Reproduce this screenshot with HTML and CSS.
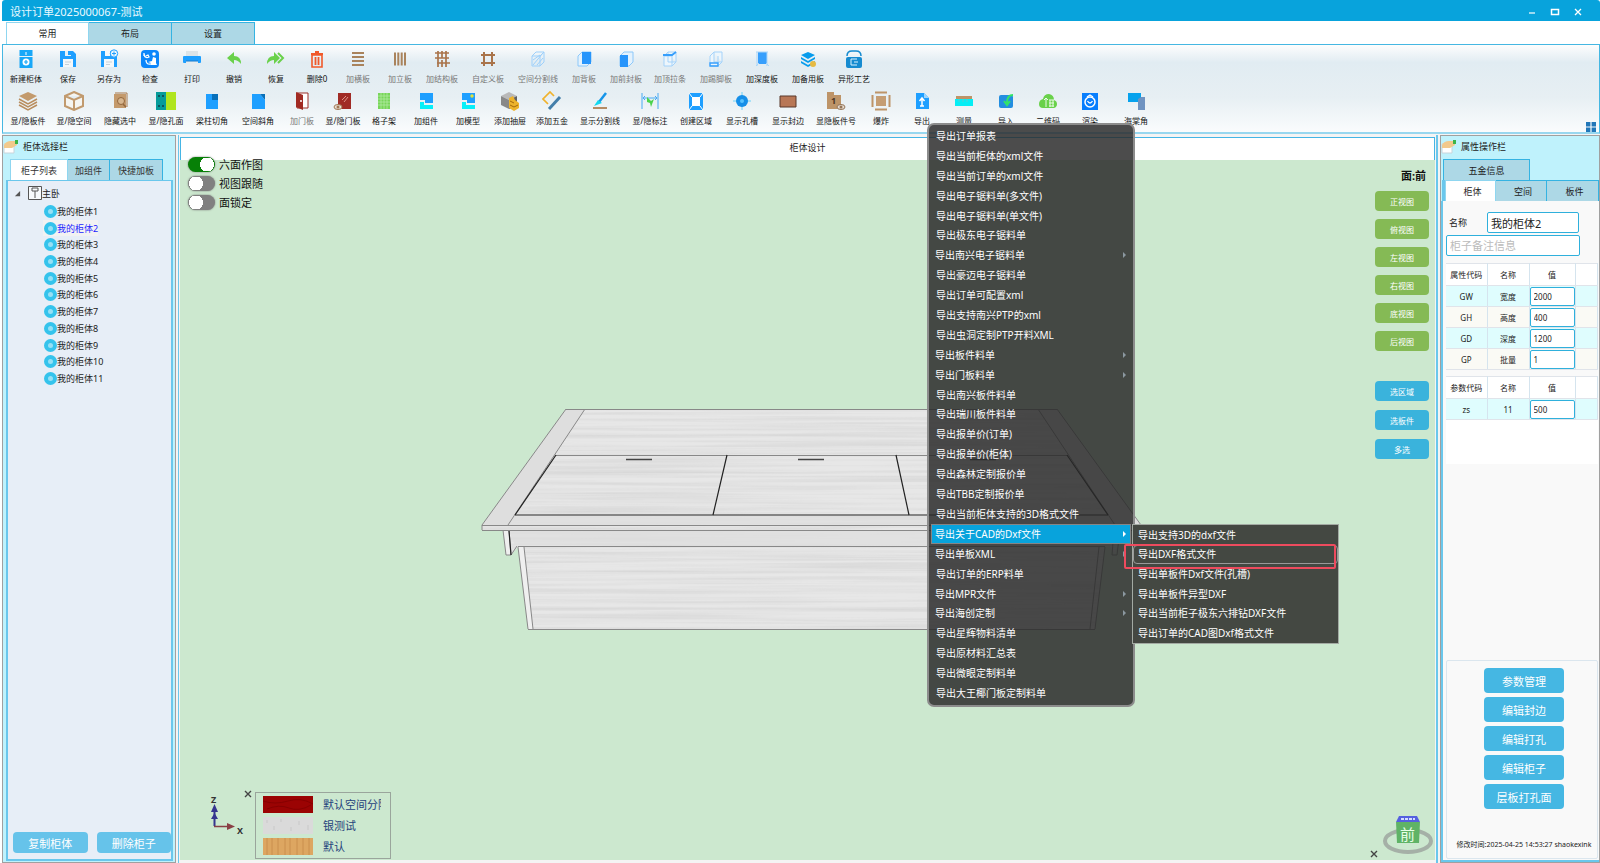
FILE: index.html
```html
<!DOCTYPE html>
<html lang="zh-CN">
<head>
<meta charset="utf-8">
<title>设计订单2025000067-测试</title>
<link rel="stylesheet" href="styles.css">
</head>
<body>
<div class="app">
<header class="titlebar">
  <h1>设计订单2025000067-测试</h1>
  <div class="win-buttons">
    <button aria-label="最小化"><svg viewBox="0 0 10 10"><path d="M2 6h6" stroke="#fff" stroke-width="1.2"/></svg></button>
    <button aria-label="最大化"><svg viewBox="0 0 10 10"><path d="M1.500 2.500h7v5h-7z" fill="none" stroke="#fff" stroke-width="1.500"/></svg></button>
    <button aria-label="关闭"><svg viewBox="0 0 10 10"><path d="M2 2l6 6M8 2l-6 6" stroke="#fff" stroke-width="1.300"/></svg></button>
  </div>
</header>
<nav class="tabs main-tabs">
  <button class="tab active">常用</button><button class="tab">布局</button><button class="tab">设置</button>
</nav>
<section class="ribbon">
  <div class="tool-row">
    <button class="tool"><svg viewBox="0 0 20 20"><path d="M3.500 1h13v6h-13zM3.500 8h13v11h-13z" fill="#18a8f8"/><path d="M10 3v3" stroke="#fff"/><circle cx="10" cy="13" r="3.500" fill="#fff"/><path d="M10 11v4M8 13h4" stroke="#18a8f8" stroke-width="1.200"/></svg><span>新建柜体</span></button>
    <button class="tool"><svg viewBox="0 0 20 20"><path d="M2 2h13l3 3v13h-16z" fill="#1e9fff"/><path d="M7 2h6v5h-6z" fill="#e8f1f6"/><path d="M10 2h3v4h-3z" fill="#1e9fff"/><path d="M5 10h10v8h-10z" fill="#f4f8fa"/><path d="M7 13h6M7 15.500h4" stroke="#c5d0d8"/></svg><span>保存</span></button>
    <button class="tool narrow"><svg viewBox="0 0 20 20"><path d="M2 2h13l3 3v13h-16z" fill="#1e9fff"/><path d="M6 2h5v5h-5zM5 10h10v8h-10z" fill="#f4f8fa"/><path d="M7 13h6M7 15.500h4" stroke="#c5d0d8"/><circle cx="15" cy="4.500" r="3.700" fill="#eef6fb" stroke="#1e9fff"/><path d="M15 2.500v4M13 4.500h4" stroke="#1e9fff"/></svg><span>另存为</span></button>
    <button class="tool"><svg viewBox="0 0 20 20"><rect x="1" y="1" width="18" height="18" rx="4" fill="#0b86fb"/><path d="M4 5q1 5 5 3l-1-2-2 1M4 4v3M6 11q0 5 5 4" fill="none" stroke="#fff" stroke-width="1.300"/><circle cx="14" cy="5" r="1.800" fill="#fff"/><path d="M13 8l3 1v5l1 2h-6v-2l-3-1 4-1z" fill="#fff"/></svg><span>检查</span></button>
    <button class="tool"><svg viewBox="0 0 20 20"><path d="M4 2h12v5H4z" fill="#dce4e8"/><rect x="1" y="7" width="18" height="7" rx="1" fill="#1e9fff"/><path d="M4 12h12v5H4z" fill="#e6ecef"/><path d="M4 12h12" stroke="#1479cc"/></svg><span>打印</span></button>
    <button class="tool"><svg viewBox="0 0 20 20"><path d="M3 9l7-6v4q7 0 7 8-3-4-7-4v4z" fill="#69d14a"/></svg><span>撤销</span></button>
    <button class="tool"><svg viewBox="0 0 20 20"><path d="M14 9L8 3v4q-7 0-7 8 3-4 7-4v4z" fill="#69d14a"/><path d="M12 4l5 5-5 5" fill="none" stroke="#69d14a" stroke-width="2"/></svg><span>恢复</span></button>
    <button class="tool narrow"><svg viewBox="0 0 20 20"><path d="M5 6h10v12H5z" fill="none" stroke="#f1592a" stroke-width="1.600"/><path d="M4 5h12M8 3h4M8.500 8v8M11.500 8v8" stroke="#f1592a" stroke-width="1.800"/></svg><span>删除0</span></button>
    <button class="tool off"><svg viewBox="0 0 20 20"><path d="M4 4h12M4 8h12M4 12h12M4 16h12" stroke="#a9835c" stroke-width="1.800"/></svg><span>加横板</span></button>
    <button class="tool off"><svg viewBox="0 0 20 20"><path d="M5 3.500v13M8.300 3.500v13M11.700 3.500v13M15 3.500v13" stroke="#a9835c" stroke-width="2"/></svg><span>加立板</span></button>
    <button class="tool off"><svg viewBox="0 0 20 20"><path d="M6 2v16M14 2v16M10 2v7M10 11v7M3 4h14M3 9h14M5 14h13" stroke="#a9744b" stroke-width="1.700"/></svg><span>加结构板</span></button>
    <button class="tool wider off"><svg viewBox="0 0 20 20"><path d="M6 3v14M14 3v14M3 6h14M3 14h14" stroke="#a9744b" stroke-width="2"/></svg><span>自定义板</span></button>
    <button class="tool wider off"><svg viewBox="0 0 20 20"><path d="M4 7l4-4h8v10l-4 4H4zM4 7h8v10M12 7l4-4M5 16l10-12M5 11l7-5M9 16l6-7" fill="none" stroke="#9dd0fb"/></svg><span>空间分割线</span></button>
    <button class="tool off"><svg viewBox="0 0 20 20"><path d="M4 7l4-4h9v10l-4 4H4z" fill="#e4f2fd" stroke="#8cc8fa"/><path d="M8 3h9v12H8z" fill="#2795fb"/></svg><span>加背板</span></button>
    <button class="tool off"><svg viewBox="0 0 20 20"><path d="M4 7l4-4h9v10l-4 4H4z" fill="#e4f2fd" stroke="#8cc8fa"/><path d="M4 6h8v12H4z" fill="#2795fb"/></svg><span>加前封板</span></button>
    <button class="tool wide off"><svg viewBox="0 0 20 20"><path d="M4 7l4-4h8v10l-4 4H4zM4 7h8v10M12 7l4-4M8 3v10h8" fill="#edf6fc" stroke="#a5d3fa"/><path d="M3 6h9l4-3" fill="none" stroke="#379ffc" stroke-width="1.800"/></svg><span>加顶拉条</span></button>
    <button class="tool wide off"><svg viewBox="0 0 20 20"><path d="M4 7l4-4h8v10l-4 4H4zM8 3v10h8M12 7v10" fill="#edf6fc" stroke="#a5d3fa"/><path d="M4 14h8v3H4z" fill="none" stroke="#379ffc" stroke-width="1.300"/></svg><span>加踢脚板</span></button>
    <button class="tool wide"><svg viewBox="0 0 20 20"><path d="M6 3h9v12H6z" fill="#379ffc"/><path d="M4 3h12M5 3v14M15 3v14M4 17l3-3M17 17l-3-3" fill="none" stroke="#a9d5f8"/></svg><span>加深度板</span></button>
    <button class="tool wide"><svg viewBox="0 0 20 20"><path d="M10 3l7 3-7 4-7-4zM3 8l7 4 7-4v2l-7 4-7-4zM3 12l7 4 7-4v2l-7 4-7-4z" fill="#079cec"/><circle cx="15" cy="15" r="3" fill="#e6ba42"/></svg><span>加备用板</span></button>
    <button class="tool wide"><svg viewBox="0 0 20 20"><path d="M3 7q0-5 5-5h4q5 0 5 5" fill="none" stroke="#168bd0" stroke-width="1.500"/><rect x="2" y="8" width="16" height="11" rx="2" fill="#168bd0"/><path d="M7 10v6h3M7 10h6M10 13h4M10 16h3" stroke="#d9f2ff" fill="none"/></svg><span>异形工艺</span></button>
  </div>
  <div class="tool-row">
    <button class="tool wide"><svg viewBox="0 0 20 20"><path d="M10 1l9 4-9 5-9-5z" fill="#c39a6c"/><path d="M1 8l9 5 9-5M1 11l9 5 9-5M1 14l9 5 9-5" fill="none" stroke="#b98d5e" stroke-width="1.500"/></svg><span>显/隐板件</span></button>
    <button class="tool wide"><svg viewBox="0 0 20 20"><path d="M10 1l9 4v10l-9 4-9-4V5zM1 5l9 4 9-4M10 9v10" fill="#f5f5f1" stroke="#c19a6e" stroke-width="2"/></svg><span>显/隐空间</span></button>
    <button class="tool wide"><svg viewBox="0 0 20 20"><path d="M4 3h12v14H4z" fill="#c49a6c"/><path d="M5 2h12v14" fill="none" stroke="#a8794b"/><circle cx="11" cy="10" r="3.500" fill="#d7b68f" stroke="#93673c"/><path d="M13 13l3 3" stroke="#93673c" stroke-width="1.500"/></svg><span>隐藏选中</span></button>
    <button class="tool wide"><svg viewBox="0 0 20 20"><path d="M0 1h10v18H0z" fill="#079b9a"/><path d="M10 1h10v18H10z" fill="#b0e51e"/><path d="M3 4v2M7 4v2M3 14v2M7 14v2" stroke="#123f4a" stroke-width="1.500"/></svg><span>显/隐孔面</span></button>
    <button class="tool wide"><svg viewBox="0 0 20 20"><path d="M4 3h6v6h6v9H4z" fill="#1e9fff"/><path d="M10 3h6v6h-6z" fill="#0870b9"/></svg><span>梁柱切角</span></button>
    <button class="tool wide"><svg viewBox="0 0 20 20"><path d="M4 3h8l5 6v9H4z" fill="#1e9fff"/><path d="M12 3h5v6z" fill="#0870b9"/></svg><span>空间斜角</span></button>
    <button class="tool off"><svg viewBox="0 0 20 20"><path d="M5 2h11v15H5z" fill="#fff" stroke="#9b3028"/><path d="M4 1l7 3v15l-7-3z" fill="#a12a22"/><circle cx="9" cy="10" r="1" fill="#fff"/></svg><span>加门板</span></button>
    <button class="tool narrow"><svg viewBox="0 0 20 20"><path d="M5 2h13v16H5z" fill="#a02b25"/><path d="M9 9l4-4M11 11l4-5" stroke="#dc9389"/><ellipse cx="5" cy="16" rx="4" ry="2.500" fill="#e9ded2" stroke="#a07855"/><circle cx="5" cy="16" r="1.500" fill="#a07855"/></svg><span>显/隐门板</span></button>
    <button class="tool"><svg viewBox="0 0 20 20"><path d="M4 2h12v16H4z" fill="#78d65a"/><path d="M4 5h12M4 8h12M4 11h12M4 14h12M7 2v16M10 2v16M13 2v16" stroke="#b8edaa" stroke-width=".7"/></svg><span>格子架</span></button>
    <button class="tool"><svg viewBox="0 0 20 20"><path d="M4 2h13v10H9V9H4z" fill="#1e9fff"/><path d="M4 11h4v3h9v4H4z" fill="#06f0f8"/></svg><span>加组件</span></button>
    <button class="tool"><svg viewBox="0 0 20 20"><path d="M4 2h13v10H9V9H4z" fill="#1e9fff"/><path d="M4 11h4v3h9v4H4z" fill="#06f0f8"/><circle cx="14" cy="5" r="1.700" fill="#e0e33a"/></svg><span>加模型</span></button>
    <button class="tool"><svg viewBox="0 0 20 20"><path d="M9 1l8 4-8 4-8-4z" fill="#b9b9b9"/><path d="M1 5l8 4v9l-8-4z" fill="#888"/><path d="M9 9l8-4v9l-8 4z" fill="#616161"/><path d="M9 7l4-2 2 4 4 3v5l-5 3-5-3z" fill="#edb32c"/><path d="M10 10l4 2M10 14l4 2 4-2" stroke="#a46a0c" fill="none"/></svg><span>添加抽屉</span></button>
    <button class="tool"><svg viewBox="0 0 20 20"><path d="M6 13L1 8l7-7 4 4" fill="none" stroke="#f0b22c" stroke-width="1.700"/><path d="M7 18L18 6" stroke="#447faa" stroke-width="3"/></svg><span>添加五金</span></button>
    <button class="tool widest"><svg viewBox="0 0 20 20"><path d="M9 11l7-9" stroke="#1695e9" stroke-width="2.500"/><path d="M4 15l4-6 4 3z" fill="#12d9ef"/><path d="M3 17h14" stroke="#b58c64" stroke-width="2"/></svg><span>显示分割线</span></button>
    <button class="tool wide"><svg viewBox="0 0 20 20"><path d="M2 2v16M18 2v16M3 7h14M5 5L3 7l2 2M15 5l2 2-2 2" fill="none" stroke="#48aaf3"/><path d="M7 6l4 4 3-2-3 8-1-4-3-1z" fill="#4bd34b"/></svg><span>显/隐标注</span></button>
    <button class="tool wide"><svg viewBox="0 0 20 20"><path d="M3 2h14v17H3z" fill="#1e9fff"/><path d="M6 6h8v9H6z" fill="#fff"/><path d="M3 2l3 4M17 2l-3 4M3 19l3-4M17 19l-3-4" stroke="#fff"/></svg><span>创建区域</span></button>
    <button class="tool wide"><svg viewBox="0 0 20 20"><path d="M10 1v18M1 10h18" stroke="#6bd2fa"/><circle cx="10" cy="10" r="6" fill="#168fe8"/><circle cx="10" cy="10" r="2" fill="#58c3ff"/></svg><span>显示孔槽</span></button>
    <button class="tool wide"><svg viewBox="0 0 20 20"><path d="M2 5h16v11H2z" fill="#b87756" stroke="#59382b"/></svg><span>显示封边</span></button>
    <button class="tool wider"><svg viewBox="0 0 20 20"><path d="M1 1h7v3h7v14H1z" fill="#bd9468"/><text x="5" y="13" class="icon-num">1</text><ellipse cx="15" cy="16" rx="4" ry="2.500" fill="#e6dcd2" stroke="#947557"/><circle cx="15" cy="16" r="1.500" fill="#947557"/></svg><span>显隐板件号</span></button>
    <button class="tool narrow"><svg viewBox="0 0 20 20"><path d="M5 5h10v10H5z" fill="#c59d73"/><path d="M4 1.500h12M4 18.500h12M1.500 4v12M18.500 4v12" stroke="#bd9468" stroke-width="2"/></svg><span>爆炸</span></button>
    <button class="tool"><svg viewBox="0 0 20 20"><path d="M4 2h8l5 5v11H4z" fill="#1e9fff"/><path d="M12 2v5h5" fill="#9bd5ff"/><path d="M10 15V8M7.500 10L10 7l2.500 3M8 15h4" fill="none" stroke="#fff" stroke-width="1.500"/></svg><span>导出</span></button>
    <button class="tool"><svg viewBox="0 0 20 20"><path d="M2 5h16v3H2z" fill="#bd9468"/><path d="M1 8h18v7H1z" fill="#05eef5"/><path d="M5 8v3M9 8v3M13 8v3" stroke="#5ccbd0"/></svg><span>测量</span></button>
    <button class="tool"><svg viewBox="0 0 20 20"><rect x="3" y="4" width="14" height="13" rx="2" fill="#238ee0"/><path d="M17 4q-6 0-6 8M8 10l3 4 3-4" fill="none" stroke="#32e468" stroke-width="2"/></svg><span>导入</span></button>
    <button class="tool"><svg viewBox="0 0 20 20"><path d="M5 17q-4 0-4-4t4-5q1-5 6-5 5 1 5 6 3 1 3 4t-3 4z" fill="#69d14a"/><path d="M6 9l2-2 2 2M8 8v8M11 9h5M11 12h5M11 15h5M12 9v7M15 9v7" fill="none" stroke="#eafbe6"/></svg><span>二维码</span></button>
    <button class="tool"><svg viewBox="0 0 20 20"><path d="M2 2h16v17H2z" fill="#087efd"/><circle cx="10" cy="11" r="5" fill="none" stroke="#fff" stroke-width="1.500"/><path d="M7 6l3-2 3 2M7.500 10q2.500 4 5 0" fill="none" stroke="#fff" stroke-width="1.300"/></svg><span>渲染</span></button>
    <button class="tool wider"><svg viewBox="0 0 20 20"><path d="M2 2h13v9H2z" fill="#06a2ed"/><path d="M12 8l3-2h4v13h-7z" fill="#6f93c1"/></svg><span>海棠角</span></button>
  </div>
  <button class="grid-btn" aria-label="布局"><svg viewBox="0 0 10 10"><path d="M0 0h4.400v4.400H0zM5.600 0H10v4.400H5.600zM0 5.600h4.400V10H0zM5.600 5.600H10V10H5.600z" fill="#2277b8"/></svg></button>
</section>

<main class="work">
  <aside class="side left">
    <h2><svg viewBox="0 0 16 16"><path d="M1 5h10v9H1z" fill="#fff" stroke="#c8d4da"/><path d="M1 6q2-4 7-4h6v4l-5 3H1z" fill="#f2c98c"/><path d="M12 1h3v4h-3z" fill="#3bb54a"/></svg>柜体选择栏</h2>
    <nav class="tabs"><button class="tab active">柜子列表</button><button class="tab">加组件</button><button class="tab">快捷加板</button></nav>
    <div class="tree-panel">
      <div class="tree-root"><svg class="arrow" viewBox="0 0 8 8"><path d="M7 1v6H1z" fill="#555"/></svg><svg class="room" viewBox="0 0 14 14"><path d="M.5.5h13v13H.5zM4 2h6v3H4zM7 5v7" fill="#f7fafc" stroke="#555"/></svg>主卧</div>
      <ul class="tree">
        <li><i></i>我的柜体1</li><li class="selected"><i></i>我的柜体2</li><li><i></i>我的柜体3</li><li><i></i>我的柜体4</li><li><i></i>我的柜体5</li><li><i></i>我的柜体6</li><li><i></i>我的柜体7</li><li><i></i>我的柜体8</li><li><i></i>我的柜体9</li><li><i></i>我的柜体10</li><li><i></i>我的柜体11</li>
      </ul>
      <div class="tree-actions"><button>复制柜体</button><button>删除柜子</button></div>
    </div>
  </aside>

  <section class="center">
    <h2>柜体设计</h2>
    <div class="viewport">
      <svg class="cabinet" viewBox="480 400 662 236" role="img" aria-label="柜体三维视图">
        <defs>
          <filter id="grain" x="0" y="0" width="100%" height="100%">
            <feTurbulence type="fractalNoise" baseFrequency=".004 .3" numOctaves="3" seed="4"/>
            <feColorMatrix values="0 0 0 0 .5  0 0 0 0 .5  0 0 0 0 .5  .5 0 0 0 -.16"/>
            <feComposite in2="SourceGraphic" operator="in"/>
            <feBlend in2="SourceGraphic" mode="multiply"/>
          </filter>
        </defs>
        <g filter="url(#grain)" fill="#e7e7e7">
          <path d="M565 408H1056L1140 524V529H1119L1114 554L1109 545L1104 546L1094 628H527L517 546L510 554H505L502 529H481V524z"/>
        </g>
        <path d="M565 408h19L507 524h-26z" fill="#dedede"/><path d="M1056 408h-19L1114 524h26z" fill="#dedede"/>
        <path d="M517 546h6l9 82h-5zM502 529h6l2 25h-5z" fill="#efefef"/>
        <path d="M511 515H1110L1114 524H507zM508 530H1113V544H514z" fill="#dedede" fill-opacity=".7"/>
        <g fill="none" stroke="#888" stroke-width="1">
          <path d="M565 408.500H1056M555 454.500H1066M481 524.500H1140M481 529.500H1140M517 545.500H1104M527 628.500H1094M565 408L481 524v5M1056 408L1140 524v5M584 408L507 524M1037 408L1114 524M502 529l3 25h5l-2-25M510 554l6-9M1119 529l-3 25h-5l2-25M517 546l10 82M523 546l9 82M1104 546l-10 82M1098 546l-9 82"/>
        </g>
        <path d="M514 514H1107" stroke="#666" stroke-width="1.500"/>
        <path d="M555 454L514 514M726 454l-14 60M895 454l13 60M1066 454l41 60M508 530l2 24" stroke="#222" stroke-width="1.200"/>
        <path d="M625 458.500h26M797 458.500h26M969 458.500h26" stroke="#444" stroke-width="1.500"/>
      </svg>
      <div class="toggles">
        <label><input type="checkbox" checked>六面作图</label>
        <label><input type="checkbox">视图跟随</label>
        <label><input type="checkbox">面锁定</label>
      </div>
      <div class="views">
        <strong>面:前</strong>
        <button>正视图</button><button>俯视图</button><button>左视图</button><button>右视图</button><button>底视图</button><button>后视图</button>
        <div class="pick"><button>选区域</button><button>选板件</button><button>多选</button></div>
      </div>
      <div class="legend">
        <svg class="axes" viewBox="0 0 40 48"><text x="3" y="11">Z</text><text x="29" y="42">X</text><path d="M6.500 34V17" stroke="#35358f" stroke-width="2"/><path d="M3 20l3.500-8 3.500 8zM3 27l3.500-6 3.500 6z" fill="#35358f"/><path d="M6 34.500h14" stroke="#8a3f45" stroke-width="1.500"/><path d="M19 31l8 3.500-8 3.500z" fill="#8a3f45"/></svg>
        <button class="close" aria-label="关闭图例"><svg viewBox="0 0 8 8"><path d="M1 1l6 6M7 1L1 7" stroke="#444" stroke-width="1.400"/></svg></button>
        <ul>
          <li><svg viewBox="0 0 50 17" preserveAspectRatio="none"><path d="M0 0h50v17H0z" fill="#9b0303"/><path d="M0 5q12 4 25 0t25 3M4 13q12-5 22-1t22-3" fill="none" stroke="#800000" stroke-width=".8"/></svg><span>默认空间分隔</span></li>
          <li><svg viewBox="0 0 50 17" preserveAspectRatio="none"><path d="M0 0h50v17H0z" fill="#dadada"/><path d="M4 3v3M11 9v4M18 2v3M28 10v4M36 4v4M45 8v5" stroke="#c8c8c8"/></svg><span>银测试</span></li>
          <li><svg viewBox="0 0 50 17" preserveAspectRatio="none"><path d="M0 0h50v17H0z" fill="#dda661"/><path d="M4 0v17M9 0v17M15 0v17M22 0v17M27 0v17M34 0v17M40 0v17M46 0v17" stroke="#c68c49" stroke-width=".8"/></svg><span>默认</span></li>
        </ul>
      </div>
      <div class="compass">
        <button class="close" aria-label="关闭方向"><svg viewBox="0 0 8 8"><path d="M1 1l6 6M7 1L1 7" stroke="#444" stroke-width="1.400"/></svg></button>
        <svg class="cube" viewBox="0 0 52 50"><ellipse cx="26" cy="31" rx="23" ry="11" fill="none" stroke="#a5b0a7" stroke-width="4"/><path d="M17 6h18l3 6H14z" fill="#5560e0"/><path d="M19 9h14" stroke="#d5dcff" stroke-width="2" stroke-dasharray="3 1"/><path d="M14 12h24l-1 21H15z" fill="#5fb366"/><text x="18" y="30">前</text></svg>
      </div>
    </div>
  </section>

  <aside class="side right">
    <h2><svg viewBox="0 0 16 16"><path d="M1 5h10v9H1z" fill="#fff" stroke="#c8d4da"/><path d="M1 6q2-4 7-4h6v4l-5 3H1z" fill="#f2c98c"/><path d="M12 1h3v4h-3z" fill="#3bb54a"/></svg>属性操作栏</h2>
    <nav class="tabs hardware"><button class="tab">五金信息</button></nav>
    <nav class="tabs props"><button class="tab active">柜体</button><button class="tab">空间</button><button class="tab">板件</button></nav>
    <div class="props-panel">
      <div class="props-body">
        <div class="name-row"><label for="cab-name">名称</label><input id="cab-name" value="我的柜体2"></div>
        <input class="note" aria-label="柜子备注信息" placeholder="柜子备注信息">
        <table>
          <thead><tr><th>属性代码</th><th>名称</th><th>值</th><th></th></tr></thead>
          <tbody>
            <tr><td>GW</td><td>宽度</td><td><input aria-label="宽度" value="2000"></td><td></td></tr>
            <tr><td>GH</td><td>高度</td><td><input aria-label="高度" value="400"></td><td></td></tr>
            <tr><td>GD</td><td>深度</td><td><input aria-label="深度" value="1200"></td><td></td></tr>
            <tr><td>GP</td><td>批量</td><td><input aria-label="批量" value="1"></td><td></td></tr>
          </tbody>
        </table>
        <table>
          <thead><tr><th>参数代码</th><th>名称</th><th>值</th><th></th></tr></thead>
          <tbody><tr><td>zs</td><td>11</td><td><input aria-label="zs" value="500"></td><td></td></tr></tbody>
        </table>
        <div class="blank"></div>
      </div>
      <div class="actions">
        <button>参数管理</button><button>编辑封边</button><button>编辑打孔</button><button>编辑柜子</button><button>层板打孔面</button>
        <p>修改时间:2025-04-25 14:53:27 shaokexink</p>
      </div>
    </div>
  </aside>
</main>

<div class="menu">
  <button>导出订单报表</button>
  <button>导出当前柜体的xml文件</button>
  <button>导出当前订单的xml文件</button>
  <button>导出电子锯料单(多文件)</button>
  <button>导出电子锯料单(单文件)</button>
  <button>导出极东电子锯料单</button>
  <button class="more">导出南兴电子锯料单</button>
  <button>导出豪迈电子锯料单</button>
  <button>导出订单可配置xml</button>
  <button>导出支持南兴PTP的xml</button>
  <button>导出虫洞定制PTP开料XML</button>
  <button class="more">导出板件料单</button>
  <button class="more">导出门板料单</button>
  <button>导出南兴板件料单</button>
  <button>导出瑞川板件料单</button>
  <button>导出报单价(订单)</button>
  <button>导出报单价(柜体)</button>
  <button>导出森林定制报价单</button>
  <button>导出TBB定制报价单</button>
  <button>导出当前柜体支持的3D格式文件</button>
  <button class="more open">导出关于CAD的Dxf文件</button>
  <button class="more">导出单板XML</button>
  <button>导出订单的ERP料单</button>
  <button class="more">导出MPR文件</button>
  <button class="more">导出海创定制</button>
  <button>导出星辉物料清单</button>
  <button>导出原材料汇总表</button>
  <button>导出微眼定制料单</button>
  <button>导出大王椰门板定制料单</button>
</div>
<div class="submenu">
  <button>导出支持3D的dxf文件</button>
  <button class="hover">导出DXF格式文件</button>
  <button>导出单板件Dxf文件(孔槽)</button>
  <button>导出单板件异型DXF</button>
  <button>导出当前柜子极东六排钻DXF文件</button>
  <button>导出订单的CAD图Dxf格式文件</button>
  <div class="marker"></div>
</div>
</div>
</body>
</html>
```
FILE: styles.css
```css
* { box-sizing: border-box; margin: 0; padding: 0; }
body, button, input, table { font-family: "Noto Sans", "Noto Sans CJK SC", sans-serif; font-size: 9px; color: #222; }
button { border: 0; background: none; white-space: nowrap; }
ul { list-style: none; }
svg { display: block; }

.app { position: relative; display: flex; flex-direction: column; height: 100vh; padding-left: 2px; background: #fff; overflow: hidden; }

.titlebar { display: flex; flex: none; align-items: center; justify-content: space-between; height: 21px; padding: 2px 17px 0 8px; background: #08a3dc; border-radius: 3px 3px 0 0; }
.titlebar h1 { font-size: 11px; line-height: 18px; font-weight: 400; color: #e8f9ff; }
.win-buttons { display: flex; gap: 13px; }
.win-buttons svg { width: 10px; height: 10px; }

.tabs { display: flex; flex: none; }
.tab { display: block; height: 21px; padding: 0 7px; background: #add8e6; border: 1px solid #35b3e2; border-bottom: 0; border-left-width: 0; }
.tab:first-child { border-left-width: 1px; }
.tab.active { background: #fff; border-color: #8fd6f0; }
.main-tabs { padding: 1px 0 0 4px; }
.main-tabs .tab { height: 22px; width: 83px; }

.ribbon { position: relative; z-index: 1; display: flex; flex: none; flex-direction: column; gap: 6px; height: 90px; padding: 4px 3px 0 2px; border: 1px solid #45b7e2; border-width: 1px 1px 2px; border-bottom-color: #98d7ef; background: linear-gradient(#fdfdfd, #e1ecf2 20%, #e7eff3 60%, #fafcfd); }
.tool-row { display: flex; }
.tool { display: flex; flex: none; flex-direction: column; align-items: center; gap: 4px; width: 42px; }
.tool.narrow { width: 40px; }
.tool.wide { width: 46px; }
.tool.wider { width: 50px; }
.tool.widest { width: 54px; }
.tool svg { width: 20px; height: 20px; }
.tool span { font-size: 8px; line-height: 12px; color: #111; }
.tool.off span { color: #777; }
.icon-num { font: bold 9px "Noto Sans", sans-serif; fill: #4a3624; }
.grid-btn { position: absolute; right: 3px; bottom: 0; }
.grid-btn svg { width: 10px; height: 10px; }

.work { display: flex; flex: 1; min-height: 0; gap: 2px; padding-top: 1px; background: #f4f4f4; }
.side { display: flex; flex: none; flex-direction: column; border: 1px solid #a0a0a0; background: #bff2fc; }
.side h2 { display: flex; align-items: center; gap: 4px; height: 23px; padding-bottom: 2px; font-size: 9px; font-weight: 400; }
.side h2 svg { width: 16px; height: 16px; }
.left { width: 174px; }
.left .tabs { padding: 0 7px; }
.left .tab { padding: 0 8px; color: #333; }
.left .tab:nth-child(2) { padding: 0 7px; }
.left .tab.active { padding: 0 10px; }
.tree-panel { display: flex; flex: 1; flex-direction: column; margin: 0 2px 1px 3px; border: 2px solid #6ac7ec; border-top-width: 1px; background: #e7eef7; }
.tree-root { display: flex; align-items: center; height: 20px; margin-top: 2px; padding-left: 6px; }
.tree-root .arrow { width: 7px; height: 7px; margin-right: 7px; }
.tree-root .room { width: 14px; height: 14px; }
.tree { display: grid; grid-auto-rows: 1fr; height: 184px; padding-left: 35px; }
.tree li { display: flex; align-items: center; width: max-content; padding-left: 1px; }
.tree i { width: 13px; height: 13px; border: 4px solid #35c3ec; border-radius: 50%; background: #96e0f5; }
.tree .selected { background: #f2f2f2; color: #2222ff; }
.tree-actions { display: flex; gap: 9px; margin-top: auto; padding: 0 0 6px 5px; }
.tree-actions button { flex: 1; height: 21px; border-radius: 4px; background: #66c3ea; color: #fff; font-size: 11px; }

.center { display: flex; flex: 1; flex-direction: column; min-width: 0; border: solid #6ac7ec; border-width: 0 2px 0 1px; padding: 2px 1px 3px; }
.center h2 { flex: none; height: 23px; border: 1px solid #45b5e5; border-bottom: 0; background: #fff; font-size: 9px; font-weight: 400; line-height: 20px; text-align: center; }
.viewport { position: relative; flex: 1; background: #cce8cf; }
.cabinet { position: absolute; left: calc(50% - 327px); top: 241px; width: 662px; height: 236px; }

.toggles { position: absolute; left: 8px; top: -4px; display: flex; flex-direction: column; gap: 3px; }
.toggles label { display: flex; align-items: center; gap: 4px; height: 16px; font-size: 11px; color: #111; }
.toggles input { appearance: none; width: 27px; height: 15px; border-radius: 8px; background: radial-gradient(circle at 8px 50%, #fff 7px, transparent 7px) #808080; box-shadow: 0 0 2px #777; }
.toggles input:checked { background: radial-gradient(circle at 19px 50%, #fff 7px, transparent 7px) #078007; }

.views { position: absolute; right: 6px; top: 9px; display: flex; flex-direction: column; gap: 8px; width: 54px; }
.views strong { margin-right: 3px; font-size: 11px; line-height: 14px; text-align: right; color: #111; }
.views button { height: 20px; border-radius: 4px; background: #85ba55; color: #fff; font-size: 8px; }
.pick { display: flex; flex-direction: column; gap: 9px; margin-top: 22px; }
.pick button { background: #3ab3dc; }

.close svg { width: 8px; height: 8px; }
.legend { position: absolute; left: 28px; bottom: 1px; display: flex; align-items: flex-start; }
.axes { width: 40px; height: 48px; }
.axes text { font: bold 9px "Noto Sans", sans-serif; fill: #333; }
.legend .close { margin: -2px 0 0 -4px; }
.legend ul { display: flex; flex-direction: column; gap: 4px; width: 136px; margin-left: 3px; padding: 3px 7px; border: 1px solid #9aa59c; }
.legend li { display: flex; align-items: center; gap: 10px; height: 17px; font-size: 11px; line-height: 17px; color: #25427c; }
.legend li svg { flex: none; width: 50px; height: 17px; }
.legend li span { flex: 1; margin-right: 2px; overflow: hidden; white-space: nowrap; }
.compass { position: absolute; right: 1px; bottom: 0; display: flex; align-items: flex-end; gap: 4px; }
.compass .close { margin-bottom: 2px; }
.cube { width: 52px; height: 50px; }
.cube text { font: 15px "Noto Sans CJK SC", sans-serif; fill: #e6ffe6; }

.right { width: 160px; }
.hardware { padding-left: 2px; }
.hardware .tab { width: 87px; }
.props { margin-left: 1px; border-left: 3px solid #6ac7ec; }
.props .tab { width: 51px; padding: 0 0 0 4px; }
.props .tab:last-child { flex: 1; }
.props-panel { display: flex; flex: 1; flex-direction: column; justify-content: space-between; border: solid #6ac7ec; border-width: 0 0 2px 2px; background: #f9f9f9; padding: 11px 1px 1px 3px; }
.props-body { display: flex; flex-direction: column; }
.name-row { display: flex; align-items: center; padding-left: 3px; gap: 20px; }
.name-row label { width: 18px; }
.props-body input { border: 1px solid #2fb0dc; border-radius: 2px; background: #fff; }
.name-row input, .props-body .note { height: 21px; padding: 0 3px; font-size: 11px; }
.name-row input { width: 92px; }
.props-body .note { width: 134px; margin: 2px 0 7px; }
.note::placeholder { color: #bbb; opacity: 1; }
table { width: 100%; table-layout: fixed; border-collapse: collapse; margin-bottom: 6px; background: #fff; }
th, td { height: 21px; border: 1px solid #e0e4ea; border-left: 0; border-right-color: #d5e4ee; text-align: center; font-size: 8px; font-weight: 400; }
th { height: 22px; }
th:nth-child(1) { width: 41px; }
th:nth-child(2) { width: 42px; }
th:nth-child(3) { width: 46px; }
td { background: #fafaf5; }
tr:nth-child(odd) td { background: #dffdfe; }
td input { display: block; width: 100%; height: 19px; padding: 0 3px; font-size: 8px; }
.blank { height: 44px; margin-top: -6px; background: #fff; }
.actions { display: flex; flex-direction: column; align-items: center; gap: 4px; padding: 7px 0 7px 4px; border: 1px solid #dbe6ee; border-radius: 2px; }
.actions button { width: 80px; height: 25px; border-radius: 4px; background: #45b7e3; color: #fff; font-size: 11px; }
.actions p { margin-top: 26px; font-size: 7px; line-height: 12px; white-space: nowrap; }

.menu { position: absolute; z-index: 2; left: 927px; top: 123px; display: grid; grid-auto-rows: 1fr; width: 208px; height: 584px; padding: 1px 2px 2px; border: 2px solid #8c8c8c; border-radius: 7px; background: rgba(40, 40, 40, .83); }
.menu button, .submenu button { position: relative; padding-left: 4px; border: 1px solid transparent; text-align: left; font-size: 10px; line-height: 16px; color: #fff; }
.menu .more { padding-left: 3px; }
.menu .more::after { content: ""; position: absolute; right: 4px; top: 50%; margin-top: -3px; border: 3px solid transparent; border-left-color: #8b98a0; border-right: 0; }
.menu .open { background: #08a3dc; border-color: #858585; }
.menu .open::after { border-left-color: #fff; }
.submenu { position: absolute; z-index: 3; left: 1132px; top: 524px; display: grid; grid-auto-rows: 1fr; width: 207px; height: 120px; border: 1px solid #a3aaa3; background: #444842; }
.submenu .hover { border-color: #999; border-radius: 4px; }
.marker { position: absolute; left: -9px; top: 19px; width: 212px; height: 25px; border: 2px solid #ee4b5e; border-radius: 2px; }
```
